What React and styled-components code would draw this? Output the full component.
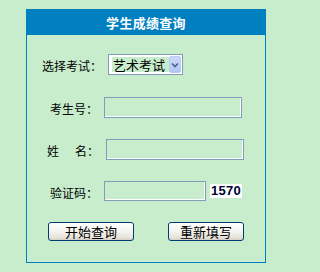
import React from "react";
import styled, { createGlobalStyle } from "styled-components";

const Global = createGlobalStyle`
  html, body { margin: 0; padding: 0; background: #c7edcc; }
  body { font-family: "Noto Sans CJK SC", "Liberation Sans", sans-serif; }
  * { box-sizing: border-box; }
`;

const Page = styled.div`
  padding: 9px 0 0 26px;
`;

const Panel = styled.div`
  width: 240px;
  height: 254px;
  border: 1px solid #0080c0;
  display: flex;
  flex-direction: column;
`;

const Header = styled.div`
  height: 25px;
  background: #0080c0;
  color: #fff;
  font-size: 13px;
  font-weight: bold;
  display: flex;
  align-items: center;
  justify-content: center;
  letter-spacing: 0.3px;
`;

const Body = styled.div`
  padding-top: 8px;
  display: flex;
  flex-direction: column;
`;

const Row = styled.div`
  height: ${(p) => p.$h}px;
  display: flex;
  align-items: center;
  padding-left: ${(p) => p.$indent}px;
`;

const Label = styled.span`
  font-size: 12px;
  color: #000;
  margin-right: ${(p) => p.$gap}px;
  white-space: nowrap;
  display: inline-flex;
  align-items: center;
  padding-top: 2px;
`;

const Spacer = styled.span`
  display: inline-block;
  width: ${(p) => p.$w}px;
`;

const SelectBox = styled.div`
  width: 75px;
  height: 21px;
  border: 1px solid #7f9db9;
  background: #fff;
  display: flex;
  align-items: center;
  padding: 1px 1px 1px 3px;
`;

const SelectText = styled.span`
  background: #c7edcc;
  font-size: 13px;
  line-height: 15px;
  padding: 0 1px;
  width: 57px;
  color: #000;
`;

const Arrow = styled.span`
  margin-left: auto;
  width: 12px;
  height: 17px;
  border-radius: 2px;
  background: linear-gradient(#cdd9fb, #b0c6f5);
  border: 1px solid #b8cbf6;
  display: flex;
  align-items: center;
  justify-content: center;
`;

const TextInput = styled.div`
  width: ${(p) => p.$w}px;
  height: ${(p) => p.$hh}px;
  border: 1px solid #7f9db9;
  box-shadow: inset -1px -1px 0 #fff;
`;

const Code = styled.span`
  margin-left: 4px;
  background: #fff;
  font-family: "Liberation Sans", Arial, sans-serif;
  font-weight: bold;
  font-size: 13px;
  line-height: 14px;
  padding: 0 1px;
  color: #000033;
  letter-spacing: 0.3px;
`;

const ButtonRow = styled.div`
  height: 38px;
  display: flex;
  align-items: center;
  padding-left: 21px;
`;

const Button = styled.div`
  width: ${(p) => p.$w}px;
  height: 19px;
  margin-right: ${(p) => p.$mr || 0}px;
  border: 1px solid #003c74;
  border-radius: 3px;
  background: linear-gradient(#ffffff 0%, #f4f3ee 50%, #e6e3da 85%, #d6d0c5 100%);
  font-size: 13px;
  display: flex;
  align-items: center;
  justify-content: center;
  color: #000;
`;

export default function App() {
  return (
    <>
      <Global />
      <Page>
        <Panel>
          <Header>学生成绩查询</Header>
          <Body>
            <Row $h={43} $indent={15}>
              <Label $gap={6}>选择考试：</Label>
              <SelectBox>
                <SelectText>艺术考试</SelectText>
                <Arrow>
                  <svg width="8" height="6" viewBox="0 0 8 6">
                    <path d="M1 1.5 L4 4.5 L7 1.5" fill="none" stroke="#4d6185" strokeWidth="1.6" />
                  </svg>
                </Arrow>
              </SelectBox>
            </Row>
            <Row $h={43} $indent={23}>
              <Label $gap={6}>考生号：</Label>
              <TextInput $w={138} $hh={21} />
            </Row>
            <Row $h={41} $indent={20}>
              <Label $gap={7}>
                姓<Spacer $w={16} />名：
              </Label>
              <TextInput $w={138} $hh={21} />
            </Row>
            <Row $h={42} $indent={23}>
              <Label $gap={6}>验证码：</Label>
              <TextInput $w={102} $hh={20} />
              <Code>1570</Code>
            </Row>
            <ButtonRow>
              <Button $w={86} $mr={34}>开始查询</Button>
              <Button $w={76}>重新填写</Button>
            </ButtonRow>
          </Body>
        </Panel>
      </Page>
    </>
  );
}
